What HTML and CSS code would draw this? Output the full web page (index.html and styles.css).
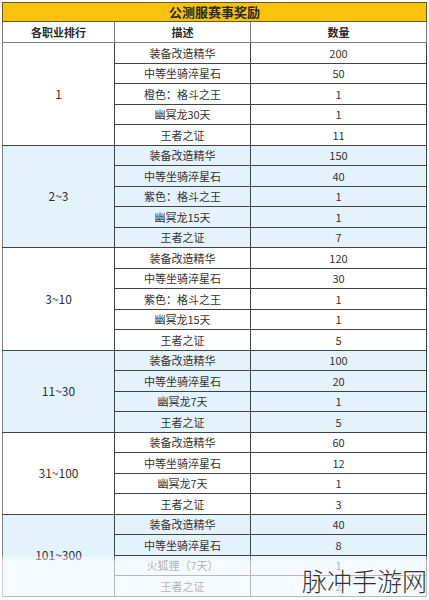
FILE: index.html
```html
<!DOCTYPE html>
<html lang="zh-CN">
<head>
<meta charset="utf-8">
<title>公测服赛事奖励</title>
<link rel="stylesheet" href="styles.css">
</head>
<body>
<div class="page">
<table class="rewards">
<colgroup><col class="c1"><col class="c2"><col class="c3"></colgroup>
<thead>
<tr class="title"><th colspan="3">公测服赛事奖励</th></tr>
<tr class="heads"><th>各职业排行</th><th>描述</th><th>数量</th></tr>
</thead>
<tbody class="grp">
<tr><td rowspan="5" class="rank">1</td><td>装备改造精华</td><td>200</td></tr>
<tr><td>中等坐骑淬星石</td><td>50</td></tr>
<tr><td>橙色：格斗之王</td><td>1</td></tr>
<tr><td>幽冥龙30天</td><td>1</td></tr>
<tr><td>王者之证</td><td>11</td></tr>
</tbody>
<tbody class="grp blue">
<tr><td rowspan="5" class="rank">2~3</td><td>装备改造精华</td><td>150</td></tr>
<tr><td>中等坐骑淬星石</td><td>40</td></tr>
<tr><td>紫色：格斗之王</td><td>1</td></tr>
<tr><td>幽冥龙15天</td><td>1</td></tr>
<tr><td>王者之证</td><td>7</td></tr>
</tbody>
<tbody class="grp">
<tr><td rowspan="5" class="rank">3~10</td><td>装备改造精华</td><td>120</td></tr>
<tr><td>中等坐骑淬星石</td><td>30</td></tr>
<tr><td>紫色：格斗之王</td><td>1</td></tr>
<tr><td>幽冥龙15天</td><td>1</td></tr>
<tr><td>王者之证</td><td>5</td></tr>
</tbody>
<tbody class="grp blue">
<tr><td rowspan="4" class="rank">11~30</td><td>装备改造精华</td><td>100</td></tr>
<tr><td>中等坐骑淬星石</td><td>20</td></tr>
<tr><td>幽冥龙7天</td><td>1</td></tr>
<tr><td>王者之证</td><td>5</td></tr>
</tbody>
<tbody class="grp">
<tr><td rowspan="4" class="rank">31~100</td><td>装备改造精华</td><td>60</td></tr>
<tr><td>中等坐骑淬星石</td><td>12</td></tr>
<tr><td>幽冥龙7天</td><td>1</td></tr>
<tr><td>王者之证</td><td>3</td></tr>
</tbody>
<tbody class="grp blue">
<tr><td rowspan="4" class="rank">101~300</td><td>装备改造精华</td><td>40</td></tr>
<tr><td>中等坐骑淬星石</td><td>8</td></tr>
<tr><td>火狐狸（7天）</td><td>1</td></tr>
<tr><td>王者之证</td><td>2</td></tr>
</tbody>
</table>
<div class="fade"></div>
<div class="watermark">脉冲手游网</div>
</div>
</body>
</html>
```
FILE: styles.css
```css
html, body {
  margin: 0;
  padding: 0;
  background: #ffffff;
}
.page {
  position: relative;
  width: 429px;
  height: 600px;
  overflow: hidden;
  padding: 2px 0 0 2px;
  box-sizing: border-box;
}
.rewards {
  width: 424px;
  border-collapse: collapse;
  table-layout: fixed;
  font-family: "Noto Sans CJK SC", "Noto Sans", sans-serif;
  font-size: 11px;
  color: #333333;
}
.c1 { width: 112px; }
.c2 { width: 136px; }
.c3 { width: 176px; }
.rewards th, .rewards td {
  border: 1px solid #3c3c3c;
  padding: 0;
  text-align: center;
  vertical-align: middle;
  line-height: 14px;
  white-space: nowrap;
}
.title th {
  background: #f8c10b;
  height: 18px;
  font-size: 13px;
  font-weight: bold;
  color: #2a2a2a;
  border-color: #6a5a2a;
}
.heads th {
  height: 20px;
  font-weight: bold;
  color: #2a2a2a;
  border-color: #7a7a7a;
}
.grp tr { height: 20.5px; }
.grp td { border-color: #404448; }
.grp td.rank {
  font-size: 12px;
  border-left-color: #808080;
}
.blue td { background: #e3f2fb; }
.fade {
  position: absolute;
  left: 0;
  right: 0;
  top: 556px;
  bottom: 0;
  background: linear-gradient(to bottom, rgba(255, 255, 255, 0.2) 0px, rgba(255, 255, 255, 0.62) 6px, rgba(255, 255, 255, 0.62) 100%);
}
.watermark {
  position: absolute;
  right: 2px;
  top: 563px;
  font-family: "Noto Sans CJK SC", sans-serif;
  font-size: 25px;
  font-weight: 300;
  line-height: 34px;
  color: #333333;
  text-shadow: 0 0 2px #fff, 0 0 2px #fff;
}
```
